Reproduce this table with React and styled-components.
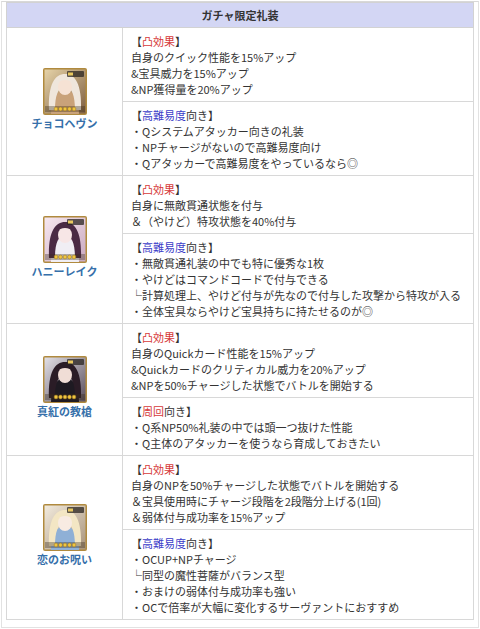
import React from "react";
import styled, { createGlobalStyle } from "styled-components";

const GlobalStyle = createGlobalStyle`
  html, body {
    margin: 0;
    padding: 0;
    background: #fff;
  }
  body {
    font-family: "Noto Sans CJK JP", "Noto Sans", sans-serif;
    color: #333;
  }
`;

const cards = [
  {
    name: "チョコヘヴン",
    palette: { bg1: "#e6d3a8", bg2: "#7e5e40", hair: "#efe6dc", skin: "#f6e2d4", dress: "#c9a27a" },
    blocks: [
      {
        label: [{ text: "凸効果", tone: "red" }],
        lines: ["自身のクイック性能を15%アップ", "&宝具威力を15%アップ", "&NP獲得量を20%アップ"],
      },
      {
        label: [{ text: "高難易度", tone: "blue" }, { text: "向き" }],
        lines: [
          "・Qシステムアタッカー向きの礼装",
          "・NPチャージがないので高難易度向け",
          "・Qアタッカーで高難易度をやっているなら◎",
        ],
      },
    ],
  },
  {
    name: "ハニーレイク",
    palette: { bg1: "#f7e8f0", bg2: "#c9a8c0", hair: "#4a2a44", skin: "#f7e6e6", dress: "#f0eef4" },
    blocks: [
      {
        label: [{ text: "凸効果", tone: "red" }],
        lines: ["自身に無敵貫通状態を付与", "＆（やけど）特攻状態を40%付与"],
      },
      {
        label: [{ text: "高難易度", tone: "blue" }, { text: "向き" }],
        lines: [
          "・無敵貫通礼装の中でも特に優秀な1枚",
          "・やけどはコマンドコードで付与できる",
          "└計算処理上、やけど付与が先なので付与した攻撃から特攻が入る",
          "・全体宝具ならやけど宝具持ちに持たせるのが◎",
        ],
      },
    ],
  },
  {
    name: "真紅の教槍",
    palette: { bg1: "#e2e0e6", bg2: "#5a4e5c", hair: "#2a1c26", skin: "#f0ddd6", dress: "#1e1a22" },
    blocks: [
      {
        label: [{ text: "凸効果", tone: "red" }],
        lines: [
          "自身のQuickカード性能を15%アップ",
          "&Quickカードのクリティカル威力を20%アップ",
          "&NPを50%チャージした状態でバトルを開始する",
        ],
      },
      {
        label: [{ text: "周回", tone: "red" }, { text: "向き" }],
        lines: ["・Q系NP50%礼装の中では頭一つ抜けた性能", "・Q主体のアタッカーを使うなら育成しておきたい"],
      },
    ],
  },
  {
    name: "恋のお呪い",
    palette: { bg1: "#f2ebde", bg2: "#a8937a", hair: "#f3e6c4", skin: "#f8ebe2", dress: "#8fb0d6" },
    blocks: [
      {
        label: [{ text: "凸効果", tone: "red" }],
        lines: [
          "自身のNPを50%チャージした状態でバトルを開始する",
          "＆宝具使用時にチャージ段階を2段階分上げる(1回)",
          "＆弱体付与成功率を15%アップ",
        ],
      },
      {
        label: [{ text: "高難易度", tone: "blue" }, { text: "向き" }],
        lines: [
          "・OCUP+NPチャージ",
          "└同型の魔性菩薩がバランス型",
          "・おまけの弱体付与成功率も強い",
          "・OCで倍率が大幅に変化するサーヴァントにおすすめ",
        ],
      },
    ],
  },
];

// card art: a rough portrait inside a gold frame, stars along the bottom
function Thumb({ palette, id }) {
  const g = "g" + id;
  return (
    <ThumbSvg width="44" height="47" viewBox="0 0 44 47">
      <defs>
        <linearGradient id={g} x1="0" y1="0" x2="1" y2="1">
          <stop offset="0" stopColor={palette.bg1} />
          <stop offset="1" stopColor={palette.bg2} />
        </linearGradient>
      </defs>
      <rect x="0" y="0" width="44" height="47" rx="2" fill="#b08a3e" />
      <rect x="1.5" y="1.5" width="41" height="44" fill={`url(#${g})`} />
      <path d="M8 46 C8 30 14 22 22 22 C30 22 36 30 36 46 Z" fill={palette.dress} />
      <path d="M6 42 C5 16 12 6 22 6 C32 6 39 16 38 42 L32 42 C32 28 29 19 22 19 C15 19 12 28 12 42 Z" fill={palette.hair} />
      <ellipse cx="22" cy="19" rx="7" ry="8" fill={palette.skin} />
      <path d="M14 15 C16 8 28 8 30 15 C26 11 18 11 14 15 Z" fill={palette.hair} />
      <rect x="24" y="3" width="17" height="6" rx="1" fill="#2a2420" opacity="0.75" />
      <rect x="25" y="4.5" width="5" height="3" fill="#e8c860" />
      <rect x="2" y="38" width="40" height="6" fill="#3a2c18" opacity="0.35" />
      {[0, 1, 2, 3, 4].map((i) => (
        <circle key={i} cx={13 + i * 4.5} cy="41" r="1.9" fill="#f0c640" stroke="#9a7420" strokeWidth="0.5" />
      ))}
    </ThumbSvg>
  );
}

export default function App() {
  return (
    <>
      <GlobalStyle />
      <Frame>
        <Table>
          <colgroup>
            <col style={{ width: 116 }} />
            <col />
          </colgroup>
          <thead>
            <tr>
              <HeaderCell colSpan={2}>ガチャ限定礼装</HeaderCell>
            </tr>
          </thead>
          <tbody>
            {cards.map((card, ci) => (
              <React.Fragment key={card.name}>
                {card.blocks.map((block, bi) => (
                  <tr key={bi}>
                    {bi === 0 && (
                      <CardCell rowSpan={card.blocks.length}>
                        <Thumb palette={card.palette} id={ci} />
                        <CardName>{card.name}</CardName>
                      </CardCell>
                    )}
                    <EffectCell>
                      <Label>
                        【
                        {block.label.map((part, pi) => (
                          <Mark key={pi} $tone={part.tone}>
                            {part.text}
                          </Mark>
                        ))}
                        】
                      </Label>
                      {block.lines.map((line, li) => (
                        <Line key={li}>{line}</Line>
                      ))}
                    </EffectCell>
                  </tr>
                ))}
              </React.Fragment>
            ))}
          </tbody>
        </Table>
      </Frame>
    </>
  );
}

const Frame = styled.div`
  margin: 1px 1px 0;
  border: 1px solid #e2e2e2;
  border-top-color: #d8d8d8;
  padding: 0 4px 7px;
  background: #fff;
`;

const Table = styled.table`
  width: 468px;
  table-layout: fixed;
  border-collapse: collapse;
  border: 1px solid #d2d2d2;
  font-size: 11px;
  line-height: 16px;
`;

const HeaderCell = styled.th`
  background: #d3d6f4;
  border: 1px solid #d2d2d2;
  padding: 4px 0 4px;
  font-weight: bold;
  color: #333;
  text-align: center;
`;

const CardCell = styled.td`
  border: 1px solid #d8d8d8;
  text-align: center;
  vertical-align: middle;
  padding: 0 0 4px;
`;

const ThumbSvg = styled.svg`
  display: block;
  margin: 0 auto;
`;

const CardName = styled.div`
  margin-top: 0;
  font-size: 11px;
  font-weight: bold;
  color: #3670aa;
  line-height: 16px;
`;

const EffectCell = styled.td`
  border: 1px solid #d8d8d8;
  padding: 5px 6px 4px 8px;
  vertical-align: top;
  color: #333;
  white-space: nowrap;
`;

const Label = styled.div``;

const Mark = styled.span`
  color: ${(p) => (p.$tone === "red" ? "#d63a3a" : p.$tone === "blue" ? "#3c3cc8" : "#333")};
`;

const Line = styled.div``;
